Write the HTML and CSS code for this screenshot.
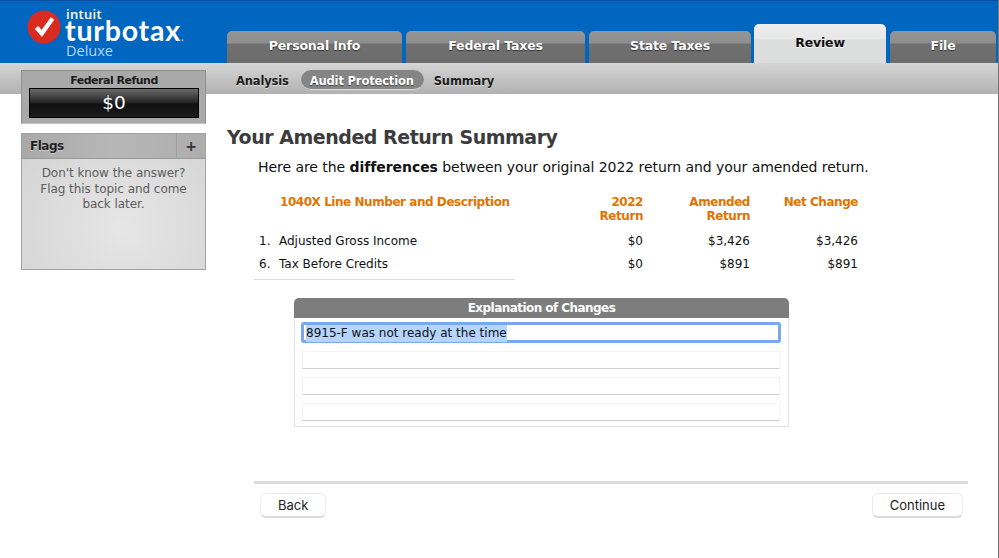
FILE: index.html

```html
<!DOCTYPE html>
<html lang="en">
<head>
  <meta charset="UTF-8">
  <meta name="viewport" content="width=device-width, initial-scale=1.0">
  <title>TurboTax Deluxe - Review</title>
  <link rel="stylesheet" href="styles.css">
</head>
<body>
  <div class="app">
    <header class="topbar">
      <div class="logo">
        <svg class="logo-mark" width="34" height="34" viewBox="0 0 34 34">
          <circle cx="17" cy="17" r="16.5" fill="#d92b1f"/>
          <path d="M9.5 17.5 L14.8 23.5 L25.5 8.5" fill="none" stroke="#fff" stroke-width="4.4" stroke-linejoin="miter"/>
        </svg>
        <div class="logo-text">
          <span class="logo-intuit">intuit</span>
          <span class="logo-name">turbotax<i>.</i></span>
          <span class="logo-edition">Deluxe</span>
        </div>
      </div>
      <nav class="tabs">
        <a class="tab tab-personal">Personal Info</a>
        <a class="tab tab-federal">Federal Taxes</a>
        <a class="tab tab-state">State Taxes</a>
        <a class="tab tab-review active">Review</a>
        <a class="tab tab-file">File</a>
      </nav>
    </header>

    <div class="workspace">
      <aside class="sidebar">
        <div class="refund">
          <div class="refund-label">Federal Refund</div>
          <div class="refund-amount">$0</div>
        </div>
        <div class="flags">
          <div class="flags-head">
            <span class="flags-title">Flags</span>
            <span class="flags-add">+</span>
          </div>
          <p class="flags-text">Don't know the answer? Flag this topic and come back later.</p>
        </div>
      </aside>

      <main class="main">
        <nav class="subnav">
          <a class="subnav-item">Analysis</a>
          <a class="subnav-item current">Audit Protection</a>
          <a class="subnav-item">Summary</a>
        </nav>

        <h1 class="title">Your Amended Return Summary</h1>
        <p class="intro">Here are the <b>differences</b> between your original 2022 return and your amended return.</p>

        <div class="summary">
          <div class="row head">
            <div class="desc">1040X Line Number and Description</div>
            <div class="num">2022<br>Return</div>
            <div class="num">Amended<br>Return</div>
            <div class="num">Net Change</div>
          </div>
          <div class="row">
            <div class="line">1.</div>
            <div class="label">Adjusted Gross Income</div>
            <div class="num">$0</div>
            <div class="num">$3,426</div>
            <div class="num">$3,426</div>
          </div>
          <div class="row">
            <div class="line">6.</div>
            <div class="label">Tax Before Credits</div>
            <div class="num">$0</div>
            <div class="num">$891</div>
            <div class="num">$891</div>
          </div>
        </div>
        <div class="summary-rule"></div>

        <section class="explain">
          <div class="explain-head">Explanation of Changes</div>
          <div class="explain-body">
            <div class="explain-line focused"><span class="selected">8915-F was not ready at the time</span></div>
            <div class="explain-line"></div>
            <div class="explain-line"></div>
            <div class="explain-line"></div>
          </div>
        </section>

        <div class="footer">
          <button class="button">Back</button>
          <button class="button">Continue</button>
        </div>
      </main>
    </div>
  </div>
</body>
</html>
```

FILE: styles.css

```css
* { box-sizing: border-box; }
html, body { margin: 0; height: 100%; }
body { font-family: "DejaVu Sans", sans-serif; background: #fff; color: #111; overflow: hidden; }

.app { width: 999px; height: 558px; border-right: 1px solid #777; }

/* top blue bar */
.topbar { height: 63px; background: #0066bf; border-top: 1px solid #0a4f9c; display: flex; align-items: flex-end; }
.logo { width: 227px; height: 62px; padding: 9px 0 0 27px; display: flex; gap: 4px; color: #fff; }
.logo-mark { flex: none; }
.logo-text { display: flex; flex-direction: column; font-family: "Open Sans", sans-serif; }
.logo-intuit { height: 10px; font-size: 13px; line-height: 9px; font-weight: 600; padding-left: 1px; letter-spacing: .3px; }
.logo-name { height: 22px; font-family: "Lato", sans-serif; font-size: 28.5px; line-height: 21px; font-weight: 700; letter-spacing: .8px; }
.logo-name i { font-size: 11px; font-style: normal; color: #a9c9ea; letter-spacing: 0; }
.logo-edition { height: 17px; font-size: 14.5px; line-height: 17px; color: #b9d5f1; padding-left: 1px; }

.tabs { display: flex; align-items: flex-end; gap: 4px; }
.tab { display: block; height: 32px; padding-top: 7px; text-align: center; font-size: 12.5px; letter-spacing: -.15px; font-weight: bold; color: #fff; text-shadow: 0 1px 1px #333; border-radius: 5px 5px 0 0; background: linear-gradient(#959595 0, #8e8e8e 12px, #707070 13px, #6c6c6c 100%); }
.tab-personal { width: 175px; }
.tab-federal { width: 179px; }
.tab-state { width: 162px; }
.tab-review { width: 132px; height: 39px; padding-top: 11px; margin: 0 0 0 -1px; color: #111; text-shadow: 0 1px 0 #fff; background: linear-gradient(#ededed 0, #e8e8e8 15px, #dcdddd 16px, #dddddd 100%); }
.tab-file { width: 106px; }

/* grey band behind the sub nav */
.workspace { display: flex; height: 495px; background: linear-gradient(#d6d6d6, #b1b1b1) no-repeat; background-size: 100% 31px; }

.sidebar { width: 227px; flex: none; padding: 7px 21px 0 21px; }
.refund { height: 54px; padding: 3px 6px 0 7px; background: #a9a9a9; border: 1px solid #8f8f8f; border-bottom-color: #c4c4c4; }
.refund-label { font-size: 11px; letter-spacing: -.5px; line-height: 13px; font-weight: bold; text-align: center; color: #1c1c1c; }
.refund-amount { height: 30px; margin-top: 1px; border: 1px solid #000; text-align: center; font-size: 18.5px; line-height: 27px; color: #fff; background: linear-gradient(#6a6a6a 0, #2a2a2a 45%, #111 55%, #1c1c1c 100%); }

.flags { margin-top: 9px; height: 137px; border: 1px solid #a2a2a2; background: radial-gradient(ellipse at 55% 70%, #e6e6e6, #d2d2d2); }
.flags-head { height: 25px; display: flex; background: linear-gradient(90deg, #a9a9a9, #b7b7b7 50%, #adadad); border-bottom: 1px solid #999; }
.flags-title { flex: 1; padding-left: 8px; font-size: 12px; letter-spacing: -.5px; line-height: 24px; font-weight: bold; color: #222; text-shadow: 0 1px 0 #ccc; }
.flags-add { width: 29px; border-left: 1px solid #a0a0a0; text-align: center; font-size: 14px; line-height: 24px; font-weight: bold; color: #333; }
.flags-text { margin: 7px 14px 0; font-size: 12px; letter-spacing: -.05px; line-height: 15.5px; text-align: center; color: #5c5c5c; }

.main { flex: 1; min-width: 0; }

.subnav { height: 31px; display: flex; align-items: center; gap: 11px; padding: 5px 0 0 9px; }
.subnav-item { font-size: 11.5px; letter-spacing: -.15px; font-weight: bold; color: #1c1c1c; text-shadow: 0 1px 0 #ddd; }
.subnav-item.current { height: 20px; padding: 0 10px 0 9px; margin: 0 -1px 3px 1px; border-radius: 10px; line-height: 22px; color: #fff; text-shadow: 0 1px 1px #444; background: #858585; border-bottom: 1px solid #ddd; }

.title { margin: 31px 0 0; font-size: 19px; letter-spacing: -.47px; line-height: 24px; font-weight: bold; color: #3c3c3c; }
.intro { margin: 9px 0 0 31px; font-size: 14px; letter-spacing: -.055px; line-height: 18px; color: #111; }

.summary { margin: 19px 0 0 27px; }
.row { display: grid; grid-template-columns: 25px 277px 87px 107px 108px; align-items: center; height: 23px; font-size: 12px; color: #111; }
.row.head { grid-template-columns: 302px 87px 107px 108px; align-items: start; height: 34px; letter-spacing: -.45px; line-height: 14px; font-weight: bold; color: #e07400; }
.desc { padding-left: 26px; }
.line { padding-left: 5px; }
.num { text-align: right; }
.summary-rule { width: 261px; margin: 4px 0 0 27px; border-top: 1px solid #ddd; }

.explain { width: 495px; margin: 18px 0 0 67px; }
.explain-head { height: 20px; border-radius: 5px 5px 0 0; background: #7d7d7d; text-align: center; font-size: 12px; letter-spacing: -.55px; line-height: 21px; font-weight: bold; color: #fff; }
.explain-body { height: 109px; padding: 4px 8px 0; border: 1px solid #e2e2e2; border-top: 0; }
.explain-line { height: 18px; margin-top: 8px; margin-left: -1px; border: 1px solid #f3f3f3; border-bottom: 1px solid #cfcfcf; }
.explain-line.focused { height: 21px; margin: 0 -1px 0 -2px; padding: 0 2px; border: 3px solid #7aa6f2; border-radius: 3px; font-size: 12px; line-height: 17px; color: #111; }
.selected { background: #b4d5fe; display: inline-block; }

.footer { width: 714px; margin: 54px 0 0 27px; padding: 9px 5px 0 6px; border-top: 3px solid #dcdcdc; display: flex; justify-content: space-between; }
.button { height: 25px; padding: 0 17px; background: #fff; border: 1px solid #ececec; border-bottom: 2px solid #dadada; border-radius: 6px; font-family: "Inter", sans-serif; font-size: 13px; color: #222; }
```
